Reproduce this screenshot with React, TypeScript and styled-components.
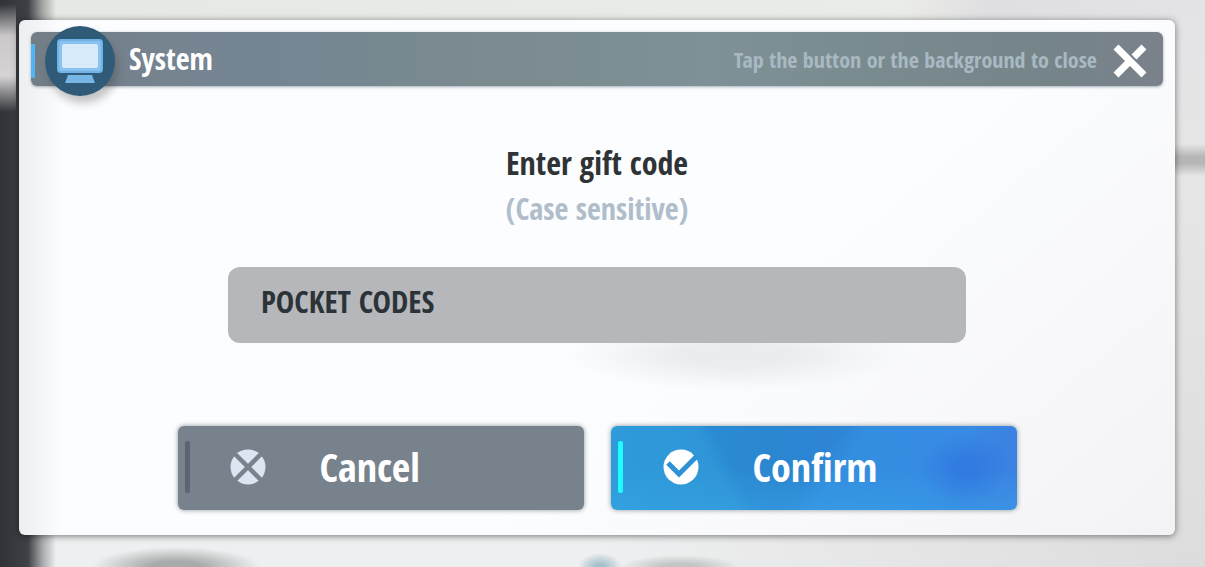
import React, { useState } from "react";
import styled, { createGlobalStyle, css } from "styled-components";

const GlobalStyle = createGlobalStyle`
  *, *::before, *::after { box-sizing: border-box; }
  body {
    margin: 0;
    font-family: "Open Sans Condensed", "Open Sans", "Noto Sans", sans-serif;
    font-weight: 700;
  }
  button, input { font: inherit; }
`;

/* Out-of-focus lobby scene behind the dialog */
const Backdrop = styled.main`
  min-height: 100vh;
  padding: 20px 30px 32px 19px;
  overflow: hidden;
  background:
    linear-gradient(180deg, transparent 4px, #cbc8ca 36px, #d6d3d5 76px, transparent 112px) 0 0 / 16px 120px no-repeat,
    radial-gradient(ellipse 84px 20px at 176px 100%, #a9aaaa 30%, transparent 100%),
    radial-gradient(ellipse 22px 14px at 600px 100%, #a5bfc9 20%, transparent 100%),
    radial-gradient(ellipse 60px 12px at 680px 100%, #c4c6c5 30%, transparent 100%),
    linear-gradient(180deg, transparent 0, #b6b6b7 40%, #b6b6b7 60%, transparent 100%) 100% 144px / 30px 32px no-repeat,
    linear-gradient(90deg, rgba(43, 47, 51, 0.98) 0, rgba(52, 56, 61, 0.95) 28px, rgba(52, 56, 61, 0.4) 42px, transparent 56px),
    linear-gradient(90deg, #e6e8e3 0, #eaece7 75%, #dfdfe2 82%, #e4e4e6 100%) top / 100% 20px no-repeat,
    linear-gradient(180deg, #e4e4e6 0, #e6e6e7 30%, #dcdcdc 100%) 100% 20px / 30px 100% no-repeat,
    linear-gradient(90deg, #eeeff0 0, #eeeff0 50%, #e0e0e0 90%, #dcdcdc 100%);
`;

const Dialog = styled.form`
  padding: 12px 12px 25px;
  border-radius: 6px;
  background:
    radial-gradient(ellipse 170px 36px at 62% 65%, #e9edf0 30%, transparent 100%),
    linear-gradient(90deg, #eceeef 0, transparent 44px),
    linear-gradient(140deg, transparent 60%, #f3f3f5 100%),
    #fcfdff;
  box-shadow: 0 1px 7px rgba(0, 0, 0, 0.5);
`;

const Header = styled.header`
  display: flex;
  align-items: center;
  height: 54px;
  padding: 4px 12px 0 0;
  border-radius: 6px;
  background: linear-gradient(90deg, #737d86 0, #768490 12%, #758593 22%, #7a8a8f 38%, #7f9196 60%, #758589 88%, #7a818b 100%);
  box-shadow: 0 1px 3px rgba(50, 80, 90, 0.45);

  &::before {
    content: "";
    width: 4px;
    height: 34px;
    background: #50b5f5;
  }
`;

const Badge = styled.span`
  display: grid;
  place-items: center;
  flex: none;
  width: 70px;
  height: 70px;
  margin: 0 14px 0 10px;
  border-radius: 50%;
  background: #2f5a78;
  box-shadow: 3px 7px 8px rgba(60, 55, 60, 0.3);
`;

const Title = styled.h1`
  flex: 1;
  margin: 0;
  padding-bottom: 4px;
  font-size: 30px;
  line-height: 40px;
  color: #fff;
`;

const Hint = styled.p`
  margin: 0;
  padding-bottom: 4px;
  font-size: 22px;
  line-height: 30px;
  color: #a9b9c3;
`;

const CloseButton = styled.button`
  display: flex;
  margin-left: 12px;
  padding: 4px;
  border: 0;
  background: none;
  color: #fff;
  cursor: pointer;
`;

const Body = styled.div`
  display: flex;
  flex-direction: column;
  align-items: center;
  padding-top: 54px;
`;

const Prompt = styled.label`
  display: flex;
  flex-direction: column;
  align-items: center;
  font-size: 32px;
  line-height: 46px;
  color: #303336;
`;

const Note = styled.span`
  font-size: 30px;
  color: #b0becb;
`;

const CodeInput = styled.input`
  width: 100%;
  max-width: 738px;
  height: 76px;
  margin-top: 35px;
  padding: 0 33px 8px;
  border: 0;
  border-radius: 12px;
  background: #b6b7bb;
  font-size: 31px;
  color: #2c3338;
  outline: none;
`;

const Actions = styled.div`
  display: flex;
  gap: 27px;
  width: 100%;
  max-width: 839px;
  margin-top: 83px;
`;

const variants = {
  cancel: css`
    --accent: #5b6670;
    --icon: #dce6f2;
    background: #78828d;
  `,
  confirm: css`
    --accent: #1ffbff;
    --icon: #fff;
    background:
      radial-gradient(ellipse 44px 36px at 87% 50%, rgba(45, 115, 225, 0.6) 20%, transparent 100%),
      linear-gradient(62deg, rgba(55, 165, 222, 0.4) 28%, transparent 32%),
      linear-gradient(125deg, transparent 50%, rgba(60, 160, 240, 0.35) 56%, rgba(60, 160, 240, 0.25) 78%, transparent 86%),
      linear-gradient(0deg, rgba(60, 170, 235, 0.4) 0, transparent 50%),
      linear-gradient(90deg, #2894d8 0, #2b86d0 40%, #3284dc 75%, #3c82e2 100%);
  `,
};

const ActionButton = styled.button<{ $variant: keyof typeof variants }>`
  display: flex;
  flex: 1;
  align-items: center;
  height: 84px;
  padding: 0 0 2px 7px;
  border: 0;
  border-radius: 6px;
  box-shadow: 0 0 5px rgba(50, 65, 75, 0.55);
  font-size: 40px;
  line-height: 52px;
  color: #fff;
  cursor: pointer;
  ${(p) => variants[p.$variant]}

  &::before {
    content: "";
    width: 5px;
    height: 52px;
    border-radius: 2px;
    background: var(--accent);
  }

  svg {
    flex: none;
    margin: 0 54px 0 40px;
    color: var(--icon);
  }
`;

const MonitorIcon = () => (
  <svg width="46" height="46" viewBox="0 0 46 46" aria-hidden="true">
    <rect x="0" y="1" width="46" height="34" rx="4" fill="#70b2e6" />
    <rect x="2" y="3" width="42" height="30" rx="3" fill="#88c2f0" />
    <rect x="5" y="6" width="36" height="24" rx="2" fill="#d8ebfb" />
    <path d="M11 37H35L38 45H8Z" fill="#78b6e6" />
  </svg>
);

const CloseIcon = () => (
  <svg width="34" height="36" viewBox="0 0 34 36" fill="none" stroke="currentColor" strokeWidth="7" aria-hidden="true">
    <path d="M3 4L31 32M3 32L17 18M21 14L31 4" />
  </svg>
);

const CancelIcon = () => (
  <svg width="36" height="36" viewBox="0 0 36 36" aria-hidden="true">
    <circle cx="18" cy="18" r="17.5" fill="currentColor" />
    <path d="M3 3L33 33M33 3L3 33" stroke="#78828d" strokeWidth="4.5" />
  </svg>
);

const ConfirmIcon = () => (
  <svg width="36" height="36" viewBox="0 0 36 36" aria-hidden="true">
    <circle cx="18" cy="18" r="17.5" fill="currentColor" />
    <path d="M5 14L16 25L35 6" fill="none" stroke="#2d92d6" strokeWidth="5" />
  </svg>
);

export default function App() {
  const [code, setCode] = useState("POCKET CODES");

  return (
    <>
      <GlobalStyle />
      <Backdrop>
        <Dialog role="dialog" aria-labelledby="dialog-title" onSubmit={(e) => e.preventDefault()}>
          <Header>
            <Badge>
              <MonitorIcon />
            </Badge>
            <Title id="dialog-title">System</Title>
            <Hint>Tap the button or the background to close</Hint>
            <CloseButton type="button" aria-label="Close">
              <CloseIcon />
            </CloseButton>
          </Header>
          <Body>
            <Prompt htmlFor="gift-code">
              Enter gift code
              <Note>(Case sensitive)</Note>
            </Prompt>
            <CodeInput
              id="gift-code"
              type="text"
              value={code}
              onChange={(e) => setCode(e.target.value)}
            />
            <Actions>
              <ActionButton type="button" $variant="cancel">
                <CancelIcon />
                Cancel
              </ActionButton>
              <ActionButton type="submit" $variant="confirm">
                <ConfirmIcon />
                Confirm
              </ActionButton>
            </Actions>
          </Body>
        </Dialog>
      </Backdrop>
    </>
  );
}
